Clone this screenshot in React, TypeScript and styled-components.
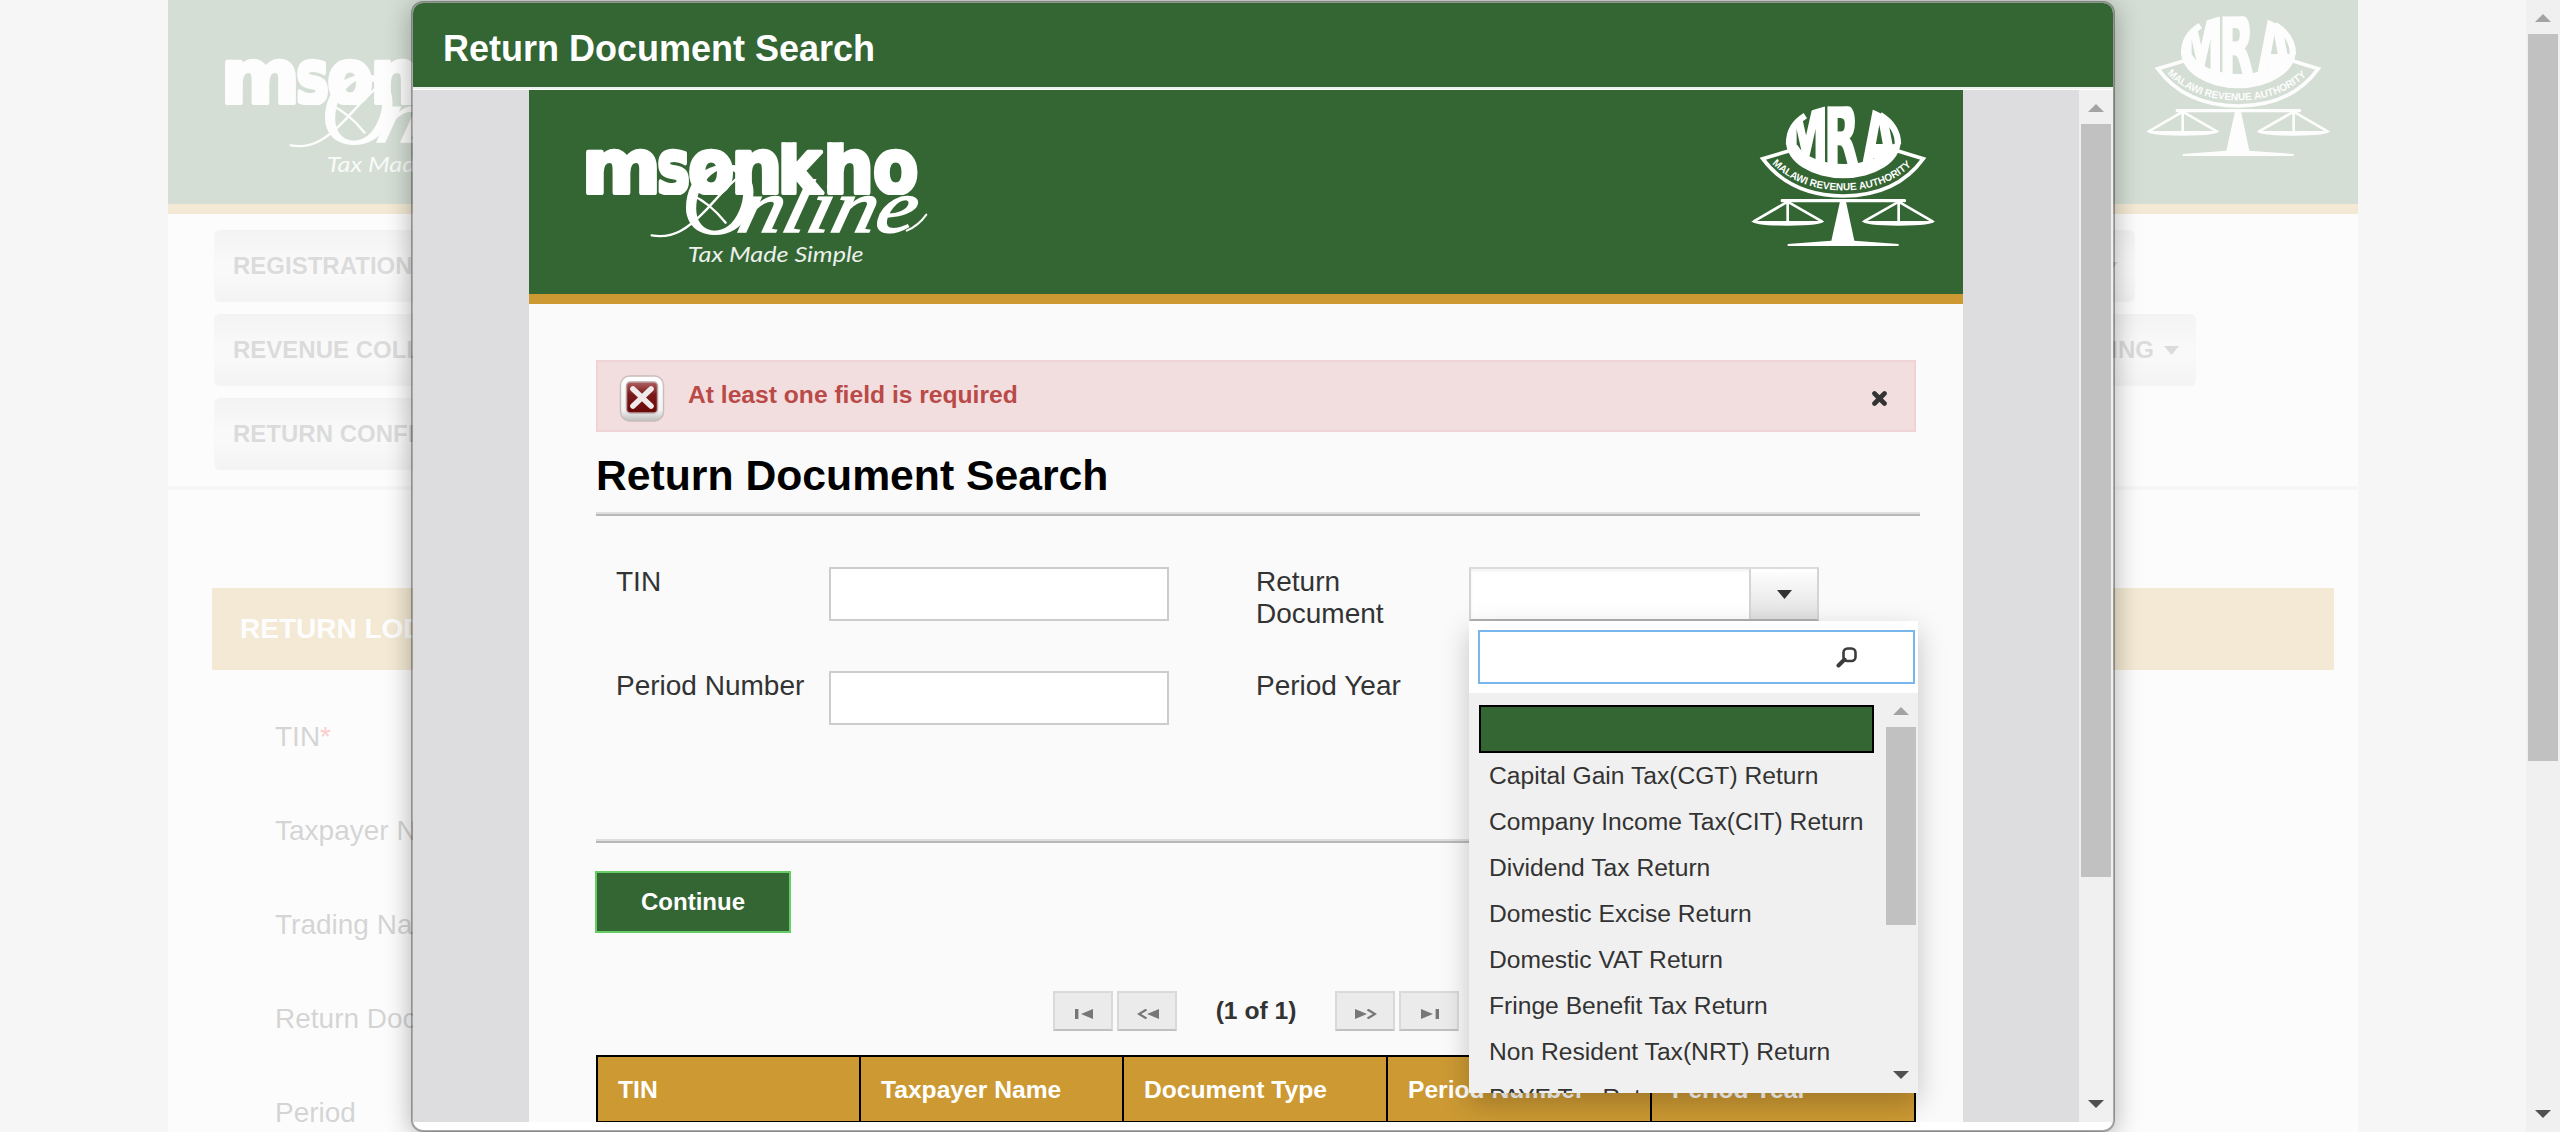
import React from 'react';
import styled, { createGlobalStyle, css } from 'styled-components';

const GREEN = '#336633';
const GOLD = '#cc9933';

const GlobalStyle = createGlobalStyle`
  *, *::before, *::after { box-sizing: border-box; }
  body {
    margin: 0;
    overflow: hidden;
    font-family: "Liberation Sans", Arial, Helvetica, sans-serif;
    color: #333;
  }
`;

const Screen = styled.div`
  position: relative;
  width: 2560px;
  height: 1132px;
  overflow: hidden;
  background: #dddddf;
`;

/* ---------- page behind the dialog ---------- */

const Page = styled.div`
  display: flex;
  height: 100%;
`;

const PageBody = styled.div`
  flex: 1;
  display: flex;
  justify-content: center;
  overflow: hidden;
`;

const PageColumn = styled.div`
  width: 2190px;
  background: #fafafa;
`;

const Veil = styled.div`
  position: absolute;
  inset: 0 34px 0 0;
  background: rgba(253, 253, 253, 0.8);
`;

const Banner = styled.header`
  display: flex;
  justify-content: space-between;
  align-items: flex-start;
  height: 214px;
  padding: 0 13px 0 31px;
  background: ${GREEN};
  border-bottom: 10px solid ${GOLD};
`;

const BrandSvg = styled.svg`
  display: block;
  width: 420px;
  height: 204px;
`;

const CrestSvg = styled.svg`
  display: block;
  width: 210px;
  height: 160px;
  margin-top: 5px;
`;

const Nav = styled.nav`
  display: flex;
  flex-direction: column;
  gap: 12px;
  padding: 16px 0 16px 46px;
  border-bottom: 4px solid #dadada;
`;

const NavRow = styled.div<{ $width?: number }>`
  display: flex;
  justify-content: space-between;
  width: ${({ $width }) => ($width ? `${$width}px` : 'auto')};
`;

const NavButton = styled.div`
  display: flex;
  align-items: center;
  gap: 10px;
  height: 72px;
  padding: 0 17px 0 19px;
  border-radius: 6px;
  background: linear-gradient(#cdcdcd, #ebebeb 45%, #ebebeb 60%, #cfcfcf);
  color: #555;
  font-size: 24px;
  font-weight: bold;
  white-space: nowrap;
`;

const Section = styled.section`
  padding: 98px 24px 0 44px;
`;

const SectionTitle = styled.h2`
  display: flex;
  align-items: center;
  height: 82px;
  margin: 0 0 20px;
  padding-left: 28px;
  background: ${GOLD};
  color: #fff;
  font-size: 28px;
`;

const PageField = styled.div`
  display: flex;
  align-items: center;
  height: 94px;
  padding-left: 63px;
  font-size: 28px;
`;

const Required = styled.span`
  color: #f00;
`;

/* ---------- scroll bar ---------- */

const Track = styled.div`
  display: flex;
  flex-direction: column;
  flex: 0 0 34px;
  background: #f0f0f0;
`;

const ArrowBox = styled.svg`
  display: block;
  flex: 0 0 34px;
  width: 34px;
  height: 34px;
`;

const Thumb = styled.div<{ $size: number }>`
  height: ${({ $size }) => $size}px;
  margin: 0 2px auto;
  background: #c1c1c1;
`;

function ScrollBar({ thumb }: { thumb: number }) {
  return (
    <Track>
      <ArrowBox viewBox="0 0 34 34">
        <path d="M9 22L17 14L25 22Z" fill="#a3a3a3" />
      </ArrowBox>
      <Thumb $size={thumb} />
      <ArrowBox viewBox="0 0 34 34">
        <path d="M9 12H25L17 20Z" fill="#505050" />
      </ArrowBox>
    </Track>
  );
}

/* ---------- logos ---------- */

type Letter = { char: string; x: number; width: number };

const BRAND_LETTERS: Letter[] = [
  { char: 'm', x: 66, width: 236 },
  { char: 's', x: 291, width: 99 },
  { char: 'o', x: 385, width: 137 },
  { char: 'n', x: 514, width: 153 },
  { char: 'k', x: 653, width: 131 },
  { char: 'h', x: 790, width: 152 },
  { char: 'o', x: 939, width: 136 },
];

const CREST_LETTERS: Letter[] = [
  { char: 'M', x: 131, width: 134 },
  { char: 'R', x: 252, width: 106 },
  { char: 'A', x: 366, width: 104 },
];

interface LogoWordProps {
  letters: Letter[];
  size: number;
  baseline: number;
  weight: number;
}

function LogoWord({ letters, size, baseline, weight }: LogoWordProps) {
  return (
    <text
      y={baseline}
      fontFamily="DejaVu Sans, sans-serif"
      fontWeight="bold"
      fontSize={size}
      stroke="#fff"
      strokeWidth={weight}
      strokeLinejoin="round"
    >
      {letters.map(({ char, x, width }) => (
        <tspan key={x} x={x} textLength={width} lengthAdjust="spacingAndGlyphs">
          {char}
        </tspan>
      ))}
    </text>
  );
}

function Brand({ id }: { id: string }) {
  return (
    <BrandSvg viewBox="0 30 1260 612" fill="#fff">
      <defs>
        <clipPath id={`${id}-word`}>
          <rect x="60" y="187" width="1050" height="158" />
        </clipPath>
      </defs>
      <g clipPath={`url(#${id}-word)`}>
        <LogoWord letters={BRAND_LETTERS} size={224} baseline={338} weight={13} />
      </g>
      <g fontFamily="Liberation Serif, serif" fontStyle="italic" stroke="#fff">
        <text x="362" y="462" fontSize="312" strokeWidth="0">O</text>
        <text
          transform="translate(526 455) skewX(-14)"
          fontSize="226"
          textLength="530"
          lengthAdjust="spacingAndGlyphs"
          strokeWidth="5"
        >
          nline
        </text>
      </g>
      <g fill="none" stroke="#fff" strokeWidth="7" strokeLinecap="round">
        <path d="M275 466C340 478 385 445 440 388C480 345 500 320 530 296" />
        <path d="M395 345C430 360 470 395 497 428" />
        <path d="M1040 452Q1075 438 1099 404" strokeWidth="6" />
        <path d="M430 306C455 268 500 250 540 262C575 280 580 330 560 370" />
      </g>
      <text
        x="383"
        y="546"
        fontFamily="Lato, sans-serif"
        fontStyle="italic"
        fontSize="66"
        textLength="528"
        lengthAdjust="spacingAndGlyphs"
        opacity="0.9"
      >
        Tax Made Simple
      </text>
    </BrandSvg>
  );
}

function Crest({ id }: { id: string }) {
  return (
    <CrestSvg viewBox="0 0 630 480" fill="#fff">
      <defs>
        <clipPath id={`${id}-oval`}>
          <path d="M138 140C140 90 190 45 262 34H358C430 45 480 90 483 140C480 200 400 232 310 232C220 232 140 200 138 140Z" />
        </clipPath>
        <path id={`${id}-motto`} d="M96 206Q178 286 310 286Q442 286 524 202" />
      </defs>
      <g clipPath={`url(#${id}-oval)`}>
        <LogoWord letters={CREST_LETTERS} size={256} baseline={219} weight={8} />
      </g>
      <path d="M138 140A172 110 0 0 0 482 140L452 150A146 80 0 0 1 172 150Z" />
      <path d="M147 148C147 105 165 82 196 62" fill="none" stroke="#fff" strokeWidth="19" />
      <path d="M474 148C474 105 452 80 420 60" fill="none" stroke="#fff" strokeWidth="19" />
      <path
        d="M146 168L68 191Q150 302 310 303Q470 302 550 191L474 168"
        fill="none"
        stroke="#fff"
        strokeWidth="11"
      />
      <text fontFamily="Liberation Sans, sans-serif" fontWeight="bold" fontSize="31">
        <textPath href={`#${id}-motto`} textLength="458" lengthAdjust="spacingAndGlyphs">
          MALAWI REVENUE AUTHORITY
        </textPath>
      </text>
      <rect x="122" y="312" width="376" height="10" rx="4" />
      <g fill="none" stroke="#fff" strokeWidth="8">
        <path d="M40 380L143 320L247 380M143 320V384" />
        <path d="M371 380L476 320L579 380M476 320V384" />
      </g>
      <path d="M34 378H253Q248 392 143 392Q40 392 34 378Z" />
      <path d="M365 378H585Q580 392 476 392Q372 392 365 378Z" />
      <path d="M301 315H317L343 437L476 447V453H143V447L274 437Z" />
    </CrestSvg>
  );
}

function SiteBanner({ id }: { id: string }) {
  return (
    <Banner>
      <Brand id={id} />
      <Crest id={id} />
    </Banner>
  );
}

const Caret = () => (
  <svg width="15" height="9" viewBox="0 0 15 9" fill="currentColor">
    <path d="M0 0H15L7.5 9Z" />
  </svg>
);

/* ---------- dialog ---------- */

const Dialog = styled.div`
  position: absolute;
  left: 411px;
  top: 1px;
  display: flex;
  flex-direction: column;
  width: 1704px;
  height: 1131px;
  padding-bottom: 8px;
  overflow: hidden;
  border: 2px solid rgba(0, 0, 0, 0.32);
  border-radius: 12px;
  background: #fff;
  background-clip: padding-box;
  box-shadow: 0 4px 26px rgba(0, 0, 0, 0.3);
`;

const DialogTitle = styled.div`
  display: flex;
  align-items: center;
  flex: 0 0 86px;
  padding: 7px 0 0 30px;
  background: ${GREEN};
  border-bottom: 2px solid #eef2ee;
  color: #fff;
  font-size: 36px;
  font-weight: bold;
  line-height: 42px;
`;

const DialogBody = styled.div`
  display: flex;
  flex: 0 0 1032px;
  height: 1032px;
  margin-top: 1px;
`;

const Frame = styled.div`
  flex: 1;
  display: flex;
  justify-content: center;
  overflow: hidden;
  background: #dddddf;
`;

const FrameColumn = styled.div`
  width: 1434px;
  height: 1100px;
  background: #fafafa;
`;

const Content = styled.main`
  padding: 56px 43px 0 67px;
`;

const Alert = styled.div`
  display: flex;
  align-items: flex-start;
  width: 1320px;
  height: 72px;
  padding: 13px 27px 0 21px;
  border: 2px solid #eed4d7;
  background: #f2dede;
  color: #b94a48;
`;

const AlertText = styled.div`
  flex: 1;
  margin: 6px 0 0 23px;
  font-size: 24.64px;
  font-weight: bold;
  line-height: 28px;
`;

const CloseIcon = styled.svg`
  margin-top: 16px;
`;

const Heading = styled.h1`
  margin: 19px 0 13px;
  color: #000;
  font-size: 42.7px;
  line-height: 48px;
`;

const Rule = styled.div<{ $width?: number }>`
  width: ${({ $width }) => ($width ? `${$width}px` : 'auto')};
  height: 4px;
  border-top: 2px solid #dedede;
  border-bottom: 2px solid #b8b8b8;
`;

const Form = styled.div`
  display: grid;
  grid-template-columns: 213px 340px 87px 213px 350px;
  grid-template-rows: 54px 54px;
  row-gap: 50px;
  padding: 51px 0 114px 20px;
  box-sizing: content-box;
`;

const Label = styled.label<{ $second?: boolean }>`
  max-width: 200px;
  margin-top: -1px;
  font-size: 28px;
  line-height: 32px;
  ${({ $second }) => $second && css`grid-column: 4;`}
`;

const Input = styled.div`
  width: 340px;
  height: 54px;
  border: 2px solid #ccc;
  background: #fff;
`;

const Select = styled.div`
  position: relative;
  display: flex;
  width: 350px;
  height: 54px;
  border: 2px solid #d4d4d4;
  border-top-color: #dcdcdc;
  border-bottom-color: #b0b0b0;
  background: #fff;
  box-shadow: inset 0 2px 3px rgba(0, 0, 0, 0.06);
`;

const SelectTrigger = styled.div`
  display: flex;
  align-items: center;
  justify-content: center;
  width: 68px;
  margin-left: auto;
  padding-left: 1px;
  border-left: 2px solid #d4d4d4;
  background: linear-gradient(#fff, #e0e0e0);
  color: #333;
`;

const Panel = styled.div`
  position: absolute;
  left: -2px;
  top: 52px;
  z-index: 2;
  width: 449px;
  height: 472px;
  background: #fff;
  box-shadow: 0 10px 26px rgba(0, 0, 0, 0.22);
`;

const Filter = styled.div`
  display: flex;
  align-items: center;
  justify-content: flex-end;
  height: 54px;
  margin: 9px 3px 9px 9px;
  padding-right: 55px;
  border: 2px solid #78b7ee;
  background: #fff;
`;

const Options = styled.div`
  display: flex;
  height: 400px;
  background: #f0f0f0;
`;

const OptionList = styled.div`
  flex: 1;
  padding: 12px 10px 0;
  overflow: hidden;
`;

const Option = styled.div<{ $selected?: boolean }>`
  height: 46px;
  padding-left: 10px;
  font-size: 24.64px;
  line-height: 46px;
  white-space: nowrap;
  ${({ $selected }) =>
    $selected &&
    css`
      height: 48px;
      border: 2px solid #000;
      background: ${GREEN};
    `}
`;

const Submit = styled.button`
  display: block;
  width: 196px;
  height: 62px;
  margin: 28px 0 58px -1px;
  padding: 0;
  border: 2px solid #66cc66;
  background: ${GREEN};
  color: #fff;
  font: bold 24px "Liberation Sans", Arial, sans-serif;
`;

const Pager = styled.div`
  display: flex;
  justify-content: center;
  gap: 4px;
  width: 1320px;
  height: 40px;
`;

const PagerButton = styled.div`
  display: flex;
  align-items: center;
  justify-content: center;
  width: 60px;
  padding: 5px 0 0 1px;
  border: 2px solid #d9d9d9;
  border-bottom-color: #c0c0c0;
  background: #ebebeb;
`;

const PagerText = styled.div`
  width: 150px;
  font-size: 24.64px;
  font-weight: bold;
  line-height: 39px;
  text-align: center;
`;

const TableHead = styled.div`
  display: grid;
  grid-template-columns: 263px 263px 264px 264px 264px;
  width: 1320px;
  margin-top: 24px;
  border: 2px solid #000;
  border-right: 0;
  background: ${GOLD};
`;

const HeadCell = styled.div`
  height: 64px;
  padding: 1px 0 0 20px;
  border-right: 2px solid #000;
  color: #fff;
  font-size: 24.64px;
  font-weight: bold;
  line-height: 64px;
`;

const OPTIONS = [
  'Capital Gain Tax(CGT) Return',
  'Company Income Tax(CIT) Return',
  'Dividend Tax Return',
  'Domestic Excise Return',
  'Domestic VAT Return',
  'Fringe Benefit Tax Return',
  'Non Resident Tax(NRT) Return',
  'PAYE Tax Return',
];

const COLUMNS = ['TIN', 'Taxpayer Name', 'Document Type', 'Period Number', 'Period Year'];

const ErrorIcon = () => (
  <svg width="46" height="48" viewBox="0 0 46 48">
    <defs>
      <linearGradient id="err-rim" x1="0" y1="0" x2="0" y2="1">
        <stop offset="0" stopColor="#fff" />
        <stop offset="0.75" stopColor="#f4f4f4" />
        <stop offset="1" stopColor="#bdbdbd" />
      </linearGradient>
      <linearGradient id="err-face" x1="0" y1="0" x2="0" y2="1">
        <stop offset="0" stopColor="#b06060" />
        <stop offset="0.4" stopColor="#7a1a1a" />
        <stop offset="1" stopColor="#6a0808" />
      </linearGradient>
    </defs>
    <rect x="1.5" y="1" width="43" height="45" rx="9" fill="url(#err-rim)" stroke="#c9bcbc" strokeWidth="1.4" />
    <rect x="7.5" y="7" width="31" height="31" rx="4" fill="url(#err-face)" stroke="#b9a4a4" strokeWidth="1.5" />
    <path d="M14 14L32 31M32 14L14 31" stroke="#f0eaea" strokeWidth="5.6" strokeLinecap="round" />
  </svg>
);

const PAGER_ICONS = {
  first: <path d="M0 0H3.4V10H0ZM18 0V10L6 5Z" />,
  prev: (
    <>
      <path d="M22 0V10L10 5Z" />
      <path d="M9.5 0.5L2 5L9.5 9.5" fill="none" stroke="currentColor" strokeWidth="2.2" />
    </>
  ),
  next: (
    <>
      <path d="M0 0V10L12 5Z" />
      <path d="M12.5 0.5L20 5L12.5 9.5" fill="none" stroke="currentColor" strokeWidth="2.2" />
    </>
  ),
  last: <path d="M14.6 0H18V10H14.6ZM0 0V10L12 5Z" />,
};

function PagerIcon({ kind }: { kind: keyof typeof PAGER_ICONS }) {
  const width = kind === 'first' || kind === 'last' ? 18 : 22;
  return (
    <svg width={width} height="10" viewBox={`0 0 ${width} 10`} fill="currentColor" color="#777">
      {PAGER_ICONS[kind]}
    </svg>
  );
}

function Background() {
  return (
    <Page>
      <PageBody>
        <PageColumn>
          <SiteBanner id="page" />
          <Nav>
            <NavRow $width={1921}>
              <NavButton>REGISTRATION <Caret /></NavButton>
              <NavButton><Caret /></NavButton>
            </NavRow>
            <NavRow $width={1982}>
              <NavButton>REVENUE COLLECTION <Caret /></NavButton>
              <NavButton>ING <Caret /></NavButton>
            </NavRow>
            <NavRow>
              <NavButton>RETURN CONFIRMATION <Caret /></NavButton>
            </NavRow>
          </Nav>
          <Section>
            <SectionTitle>RETURN LODGEMENT</SectionTitle>
            <PageField>TIN<Required>*</Required></PageField>
            <PageField>Taxpayer Name</PageField>
            <PageField>Trading Name</PageField>
            <PageField>Return Document</PageField>
            <PageField>Period</PageField>
          </Section>
        </PageColumn>
      </PageBody>
      <ScrollBar thumb={727} />
    </Page>
  );
}

function ReturnDocumentSelect() {
  return (
    <Select>
      <SelectTrigger><Caret /></SelectTrigger>
      <Panel>
        <Filter>
          <svg width="22" height="22" viewBox="0 0 22 22" fill="none" stroke="#3c3c3c">
            <rect x="7.5" y="2.5" width="12" height="12.5" rx="4" strokeWidth="2.6" />
            <path d="M8.5 13.5L2.5 19.5" strokeWidth="4" strokeLinecap="round" />
          </svg>
        </Filter>
        <Options>
          <OptionList>
            <Option $selected />
            {OPTIONS.map((name) => (
              <Option key={name}>{name}</Option>
            ))}
          </OptionList>
          <ScrollBar thumb={198} />
        </Options>
      </Panel>
    </Select>
  );
}

export default function App() {
  return (
    <Screen>
      <GlobalStyle />
      <Background />
      <Veil />
      <Dialog>
        <DialogTitle>Return Document Search</DialogTitle>
        <DialogBody>
          <Frame>
            <FrameColumn>
              <SiteBanner id="dialog" />
              <Content>
                <Alert>
                  <ErrorIcon />
                  <AlertText>At least one field is required</AlertText>
                  <CloseIcon width="15" height="15" viewBox="0 0 15 15">
                    <path d="M2.5 2.5L12.5 12.5M12.5 2.5L2.5 12.5" stroke="#333" strokeWidth="4.6" strokeLinecap="round" />
                  </CloseIcon>
                </Alert>
                <Heading>Return Document Search</Heading>
                <Rule />
                <Form>
                  <Label>TIN</Label>
                  <Input />
                  <Label $second>Return Document</Label>
                  <ReturnDocumentSelect />
                  <Label>Period Number</Label>
                  <Input />
                  <Label $second>Period Year</Label>
                  <Input />
                </Form>
                <Rule $width={1320} />
                <Submit>Continue</Submit>
                <Pager>
                  <PagerButton><PagerIcon kind="first" /></PagerButton>
                  <PagerButton><PagerIcon kind="prev" /></PagerButton>
                  <PagerText>(1 of 1)</PagerText>
                  <PagerButton><PagerIcon kind="next" /></PagerButton>
                  <PagerButton><PagerIcon kind="last" /></PagerButton>
                </Pager>
                <TableHead>
                  {COLUMNS.map((name) => (
                    <HeadCell key={name}>{name}</HeadCell>
                  ))}
                </TableHead>
              </Content>
            </FrameColumn>
          </Frame>
          <ScrollBar thumb={753} />
        </DialogBody>
      </Dialog>
    </Screen>
  );
}
